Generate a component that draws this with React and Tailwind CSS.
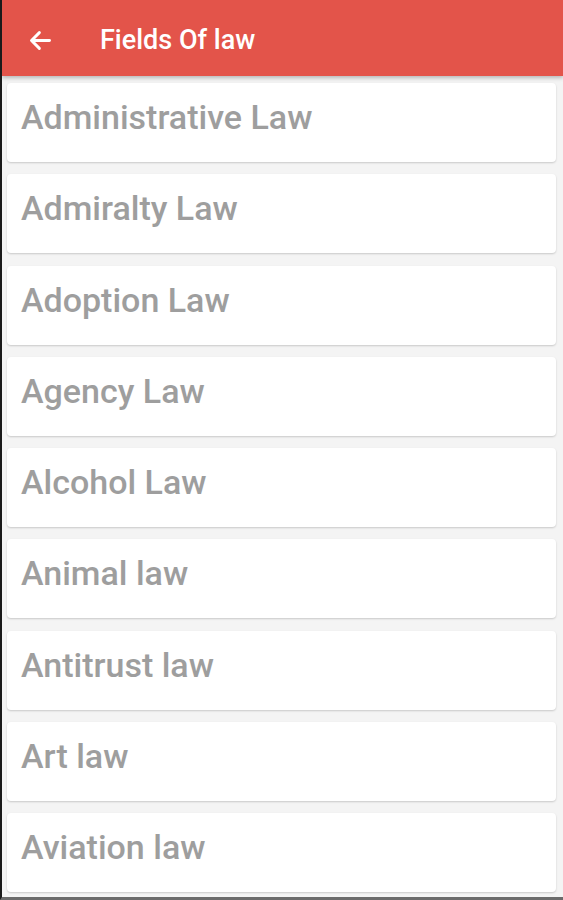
import React from "react";

const items = [
  "Administrative Law",
  "Admiralty Law",
  "Adoption Law",
  "Agency Law",
  "Alcohol Law",
  "Animal law",
  "Antitrust law",
  "Art law",
  "Aviation law",
];

export default function App() {
  return (
    <div
      className="w-[563px] h-[900px] overflow-hidden bg-[#f4f4f4] flex flex-col border-l-[2px] border-[#1a1a1a] border-b-[3px] border-b-[#6b6b6b]"
      style={{ fontFamily: "Roboto, 'Liberation Sans', sans-serif" }}
    >
      <div className="h-[76px] shrink-0 bg-[#e3544a] flex items-center pt-[5px] shadow-[0_2px_4px_rgba(0,0,0,0.25)] relative z-10">
        <svg
          className="ml-[25px] w-[27px] h-[27px]"
          viewBox="0 0 24 24"
          fill="none"
          stroke="white"
          strokeWidth="2.6"
          strokeLinecap="round"
          strokeLinejoin="round"
        >
          <path d="M20 12H5" />
          <path d="M11 5l-7 7 7 7" />
        </svg>
        <span className="ml-[46px] text-white text-[27px] font-medium">
          Fields Of law
        </span>
      </div>
      <div className="flex flex-col gap-[12.25px] pt-[7px] pl-[5px] pr-[7px]">
        {items.map((t) => (
          <div
            key={t}
            className="h-[79px] bg-white rounded-[4px] shadow-[0_1px_2px_rgba(0,0,0,0.18)] flex items-start pt-[14px] pl-[14px]"
          >
            <span className="text-[34px] font-medium text-[#9e9e9e] leading-[40px]">{t}</span>
          </div>
        ))}
      </div>
    </div>
  );
}
